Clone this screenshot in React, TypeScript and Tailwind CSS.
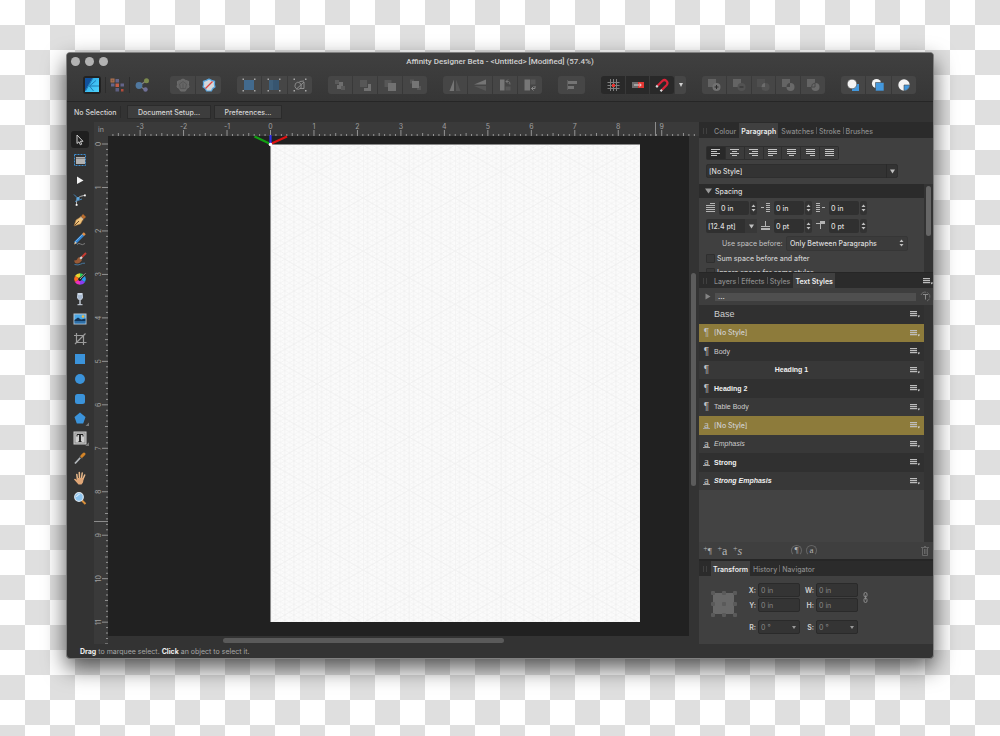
import type { ReactNode } from 'react'
import clsx from 'clsx'

const INCH = 43.47

function Svg({ w = 14, h = 14, children }: { w?: number; h?: number; children: ReactNode }) {
  return (
    <svg width={w} height={h} viewBox={`0 0 ${w} ${h}`} fill="none" className="block shrink-0" aria-hidden="true">
      {children}
    </svg>
  )
}

/* ---------- toolbar icons ---------- */

const corners = (
  <g fill="#a8a8a8">
    <rect x="0.5" y="0.5" width="1.5" height="1.5" />
    <rect x="12" y="0.5" width="1.5" height="1.5" />
    <rect x="0.5" y="12" width="1.5" height="1.5" />
    <rect x="12" y="12" width="1.5" height="1.5" />
  </g>
)

const flower = 'M7 1 9.6 2.4 12.6 3.4 12.4 6.4 13 9 10.6 10.6 9.4 13H4.6L3.4 10.6 1 9 1.6 6.4 1.4 3.4 4.4 2.4Z'

const DesignerPersona = (
  <Svg w={16} h={16}>
    <defs>
      <linearGradient id="persona" x1="0" y1="0" x2="1" y2="1">
        <stop offset="0" stopColor="#2aa9e8" />
        <stop offset="1" stopColor="#4ed2fb" />
      </linearGradient>
    </defs>
    <rect x="1" y="1" width="14" height="14" fill="url(#persona)" />
    <path d="M1 1h7.500L1 14Z" fill="#11519c" />
    <path d="M9 1 1.500 14M5.500 9H15M5.500 9 12 3.500M5.500 9l4 5" stroke="#1a6aa6" strokeWidth="0.800" />
  </Svg>
)

const PixelPersona = (
  <Svg>
    <rect x="0.500" y="0.500" width="4" height="4" fill="#b5744f" />
    <rect x="1.500" y="1.500" width="2" height="2" fill="#7d5a48" />
    <rect x="5.500" y="1" width="3.500" height="3.500" fill="#64658a" />
    <rect x="1" y="5.500" width="3.500" height="3" fill="#64658a" />
    <rect x="5.500" y="5.500" width="3.500" height="3.500" fill="#c45c45" />
    <rect x="10.500" y="5.500" width="3.500" height="3" fill="#64658a" />
    <rect x="5.500" y="10" width="3.500" height="3.500" fill="#5d5e80" />
    <rect x="11" y="11" width="2.500" height="2.500" fill="#b34b3a" />
  </Svg>
)

const ExportPersona = (
  <Svg>
    <path d="M4 8 11.500 2.500M4 8l7 4" stroke="#808080" strokeWidth="1.200" />
    <circle cx="4" cy="7.500" r="3.400" fill="#50789f" />
    <circle cx="11.500" cy="2.700" r="2.500" fill="#7c8a4d" />
    <circle cx="10.500" cy="11.500" r="2.200" fill="#6f7097" />
  </Svg>
)

type Item = { label: string; icon: ReactNode }

const defaults: Item[] = [
  {
    label: 'Synchronise Defaults',
    icon: (
      <Svg>
        <path d={flower} fill="#666666" stroke="#6e6e6e" strokeLinejoin="round" />
        <path d="M7 3.500 10.500 6 9.500 10.500h-5L3.500 6ZM7 5.500v5" stroke="#505050" strokeWidth="0.700" />
      </Svg>
    ),
  },
  {
    label: 'Revert Defaults',
    icon: (
      <Svg>
        <path d={flower} fill="#d5d8dc" stroke="#5aa7e0" strokeWidth="1.200" strokeLinejoin="round" />
        <path d="M3.500 10.500 10.500 3.500" stroke="#e0443e" strokeWidth="1.300" />
      </Svg>
    ),
  },
]

const dots = [2, 4, 6, 8, 10]

const pixelModes: Item[] = [
  {
    label: 'Pixel Grid',
    icon: (
      <Svg>
        {corners}
        <rect x="2" y="2" width="10" height="10" fill="#34516b" />
        {dots.map((y) => dots.map((x) => <rect key={`${x}-${y}`} x={x + 0.5} y={y + 0.5} width="1" height="1" fill="#6db9f5" />))}
      </Svg>
    ),
  },
  {
    label: 'Force Pixel Alignment',
    icon: (
      <Svg>
        {corners}
        <rect x="2" y="2" width="10" height="10" fill="#364a5c" />
        {dots.map((y) => dots.map((x) => <rect key={`${x}-${y}`} x={x + 0.5} y={y + 0.5} width="1" height="1" fill={x > 5 ? '#3f79ad' : '#5a9bd0'} />))}
      </Svg>
    ),
  },
  {
    label: 'Move By Whole Pixels',
    icon: (
      <Svg>
        {corners}
        <path d="M2.500 5.500Q5 3 7 5t1 5q-3 2.500-5 .5T2.500 5.500" stroke="#8f8f8f" strokeWidth="0.900" />
        <path d="M3.500 11 11 4v6.500H7M6.500 3.500 11 3" stroke="#939393" strokeWidth="0.900" />
      </Svg>
    ),
  },
]

const arrange: Item[] = [
  { label: 'Move to Back', icon: <Svg><path d="M2 2h4v4H2zM8 8h4v4H8z" fill="#5a5a5a" /><path d="M6 4h4v4h-4zM4 7h4v4H4z" fill="#6e6e6e" /></Svg> },
  { label: 'Back One', icon: <Svg><path d="M2 2h7v7H2z" fill="#575757" /><path d="M10 6h3v7H6v-3h4z" fill="#717171" /></Svg> },
  { label: 'Forward One', icon: <Svg><path d="M1.500 2h7v7h-7z" fill="#575757" /><path d="M5 5h8v8H5z" fill="#717171" /></Svg> },
  { label: 'Move to Front', icon: <Svg><path d="M2 1.500h4v4H2zM9 8h4v4H9z" fill="#575757" /><path d="M4 3h7v7H4z" fill="#757575" /></Svg> },
]

const transforms: Item[] = [
  { label: 'Flip Horizontal', icon: <Svg><path d="M6 1.500V13H1.500Z" fill="#757575" /><path d="M8 1.500V13h4.500Z" fill="#575757" /></Svg> },
  { label: 'Flip Vertical', icon: <Svg><path d="M13 1.500v5H1Z" fill="#757575" /><path d="M13 13V8H1Z" fill="#575757" /></Svg> },
  { label: 'Rotate Anticlockwise', icon: <Svg><path d="M2 1.500h4.500v11H2z" fill="#777" /><path d="M7.500 8.500h5v4h-5z" fill="#575757" /><path d="M8 3.500h2.500q1.500 0 1.500 3M10 1.500 8 3.500l2 2" stroke="#777" /></Svg> },
  { label: 'Rotate Clockwise', icon: <Svg><path d="M1.500 1.500H7v11H1.500z" fill="#777" /><path d="M7.500 1.500h5v5h-5z" fill="#575757" /><path d="M12 8v2.500H8.500M10.500 8.500l-2 2 2 2" stroke="#888" /></Svg> },
]

const alignment: Item[] = [
  { label: 'Alignment', icon: <Svg><path d="M2.500 2v10" stroke="#5c5c5c" /><path d="M3 3h9v3H3zM3 8h6v3H3z" fill="#747474" /></Svg> },
]

const snapping: Item[] = [
  {
    label: 'Show Grid',
    icon: (
      <Svg>
        <path d="M4.500 1v12M7.500 1v12M10.500 1v12M1.500 4.500h12M1.500 7.500h12M1.500 10.500h12" stroke="#808080" />
        <rect x="6" y="6" width="3" height="3" fill="#e5322d" />
      </Svg>
    ),
  },
  {
    label: 'Snap to Shape',
    icon: (
      <Svg>
        <rect x="1" y="4" width="6" height="6" fill="#6d6d6d" />
        <rect x="7" y="4" width="6" height="6" fill="#e33632" />
        <path d="M3 7h7M8.500 5.300 10.300 7 8.500 8.700" stroke="#e8e8e8" strokeWidth="0.900" />
      </Svg>
    ),
  },
  {
    label: 'Snapping',
    icon: (
      <Svg>
        <path d="M2.500 7.800 7.300 3Q9.500 1 11.500 3t0 4.200L6.800 12" stroke="#d92337" strokeWidth="2.200" />
        <path d="M1.200 9.100 2.700 7.600M5.500 13.200l1.500-1.500" stroke="#d9d9d9" strokeWidth="2.200" />
      </Svg>
    ),
  },
]

const booleans: Item[] = [
  { label: 'Add', icon: <Svg><path d="M1 1h8v8H1z" fill="#646464" /><circle cx="9.500" cy="9" r="4" fill="#717171" /><path d="M9.500 7v4M7.500 9h4" stroke="#2c2c2c" /></Svg> },
  { label: 'Subtract', icon: <Svg><path d="M1 1h8v8H1z" fill="#646464" /><circle cx="9.500" cy="9" r="4" fill="#525252" /><path d="M7.500 9h4" stroke="#2c2c2c" /></Svg> },
  { label: 'Intersect', icon: <Svg><path d="M1 1h8v8H1z" fill="#4f4f4f" /><circle cx="9.500" cy="9" r="4" fill="#525252" /><path d="M9 5.100V9H5.500Q5.600 5.400 9 5.100" fill="#6c6c6c" /></Svg> },
  { label: 'Divide', icon: <Svg><path d="M1 1h8v8H1z" fill="#646464" /><circle cx="9.500" cy="9" r="4" fill="#696969" /><path d="M9 5.100V9H5.500Q5.600 5.400 9 5.100" fill="#474747" /></Svg> },
  { label: 'Combine', icon: <Svg><path d="M1 1h8v8H1z" fill="#646464" /><circle cx="9.500" cy="9" r="4" fill="#696969" /><path d="M9 5v4H5.500Q5.600 5.400 9 5.100" stroke="#464646" strokeWidth="0.900" /></Svg> },
]

const insertion: Item[] = [
  { label: 'Insert Behind', icon: <Svg><path d="M6 6h7v7H6z" fill="#4398dd" /><circle cx="6" cy="6" r="4.800" fill="#f4f4f4" stroke="#474747" strokeWidth="0.600" /></Svg> },
  { label: 'Insert on Top', icon: <Svg><circle cx="5.500" cy="5.500" r="4.600" fill="#f4f4f4" /><path d="M4.500 4.500h8.500v8.500H4.500z" fill="#4398dd" stroke="#474747" strokeWidth="0.600" /></Svg> },
  { label: 'Insert Inside', icon: <Svg><circle cx="7" cy="7" r="5.700" fill="#f4f4f4" /><path d="M7 7h5.700A5.700 5.700 0 0 1 7 12.700Z" fill="#4398dd" stroke="#474747" strokeWidth="0.600" /></Svg> },
]

function ButtonGroup({ items, className, pressed }: { items: Item[]; className: string; pressed?: boolean }) {
  return (
    <div className={clsx('flex h-[18px] shrink-0 gap-px overflow-hidden rounded-[3px]', className)}>
      {items.map((item) => (
        <button
          key={item.label}
          aria-label={item.label}
          className={clsx('flex flex-1 items-center justify-center', pressed ? 'bg-[#292929]' : 'bg-[#464646]')}
        >
          {item.icon}
        </button>
      ))}
    </div>
  )
}

/* ---------- tools ---------- */

const shapeFill = '#3b93da'

const tools: (Item & { flyout?: boolean })[] = [
  { label: 'Move Tool', icon: <Svg><path d="M4 2v8.500l2-1.700 1.300 3 1.400-.6-1.300-2.900h2.600Z" fill="#222" stroke="#dcdcdc" strokeWidth="0.900" /></Svg> },
  {
    label: 'Artboard Tool',
    icon: (
      <Svg>
        <rect x="1.500" y="1.500" width="11" height="11" stroke="#3c8ed2" strokeDasharray="2 1" />
        <rect x="3" y="4" width="9" height="7" fill="#b1b1b1" />
        <path d="M3 5.500h9" stroke="#858585" />
      </Svg>
    ),
  },
  { label: 'Node Tool', icon: <Svg><path d="M4 3.500 10.500 7.500 4 11Z" fill="#f1f1f1" /></Svg> },
  {
    label: 'Corner Tool',
    icon: (
      <Svg>
        <path d="M3.500 12V9Q3.500 3.500 11 2.500" stroke="#c2c2c2" strokeWidth="0.900" />
        <path d="M1 1.500 5 5.500M2 8.500 9 6" stroke="#4b91c9" strokeWidth="0.900" />
        <rect x="2.700" y="11" width="1.800" height="1.800" fill="#fff" />
        <rect x="11" y="1.500" width="1.800" height="1.800" fill="#fff" />
        <circle cx="5" cy="5.500" r="1.600" fill="#5ba8e2" />
      </Svg>
    ),
  },
  {
    label: 'Pen Tool',
    icon: (
      <Svg>
        <path d="M1 13 3 7l4.500-3L10 6.500 7.500 11Z" fill="#eec27c" stroke="#a5703a" strokeWidth="0.500" />
        <path d="M1.500 12.500 6 8" stroke="#5d3d1e" strokeWidth="0.900" />
        <path d="M8 3.500 10 1l3 3-2.500 2.200Z" fill="#b96d2d" />
        <path d="M7.500 4 10.200 6.600" stroke="#e9e4da" />
      </Svg>
    ),
  },
  {
    label: 'Pencil Tool',
    icon: (
      <Svg>
        <path d="M2 11 10.500 2.500" stroke="#3386d6" strokeWidth="2.800" />
        <path d="M2.500 9.500 10 2" stroke="#80bdf0" strokeWidth="0.800" />
        <path d="M10 3 11.800 1.300" stroke="#e08d43" strokeWidth="2.800" />
        <path d="M1 12.500 3.800 11 2.300 9.500Z" fill="#f1cd9d" />
        <path d="M4 12.500q2-2 3.500-.5t4.500-.5" stroke="#8e8e8e" strokeWidth="0.800" />
      </Svg>
    ),
  },
  {
    label: 'Vector Brush Tool',
    icon: (
      <Svg>
        <path d="M1 8.500q3 .5 3.500-2L6 5l3 3-1 1.500q-2 2.500-4.500 2Q1.500 11 1 8.500Z" fill="#9a5a36" />
        <path d="M7.200 6.800 9.200 4.800" stroke="#d8d8d8" strokeWidth="2.200" />
        <path d="M9 5 13 1" stroke="#c43b31" strokeWidth="2" />
        <path d="M1.500 12.500q4 1 6-.3t4.500-1" stroke="#4a87b8" strokeWidth="0.800" />
      </Svg>
    ),
  },
  {
    label: 'Fill Tool',
    icon: (
      <Svg>
        <g strokeWidth="4">
          <path d="M7 3.200A3.800 3.800 0 0 0 3.700 5.100" stroke="#e5d832" />
          <path d="M3.700 5.100A3.800 3.800 0 0 0 3.700 8.900" stroke="#ff6a1f" />
          <path d="M3.700 8.900A3.800 3.800 0 0 0 7 10.800" stroke="#ee2fc0" />
          <path d="M7 10.800A3.800 3.800 0 0 0 10.300 8.900" stroke="#8a3df2" />
          <path d="M10.300 8.900A3.800 3.800 0 0 0 10.300 5.100" stroke="#2a9bf0" />
          <path d="M10.300 5.100A3.800 3.800 0 0 0 7 3.200" stroke="#35d35b" />
        </g>
        <path d="M6 8.500 12.500 1.500" stroke="#222" strokeWidth="2" />
        <path d="M7 7 12.500 1.200" stroke="#c4c4c4" strokeWidth="0.800" />
      </Svg>
    ),
  },
  {
    label: 'Transparency Tool',
    icon: (
      <Svg>
        <path d="M4.500 1h5l.5 4.500Q9.500 8 7 8T4 5.500Z" fill="#cdd8e6" />
        <path d="M4.800 3h4.500l.2 2.500Q9 7 7 7T4.600 5.500Z" fill="#a9bbd1" />
        <path d="M7 8v4.500" stroke="#d2dbe6" strokeWidth="1.300" />
        <path d="M4.500 12.700h5" stroke="#d2dbe6" />
      </Svg>
    ),
  },
  {
    label: 'Place Image Tool',
    icon: (
      <Svg>
        <rect x="0.500" y="1.500" width="13" height="11" fill="#b9c3cc" />
        <rect x="1.500" y="2.500" width="11" height="9" fill="#4ba7e5" />
        <path d="M1.500 8 5 5.500 8 7.500l4.500-1V9.500h-11Z" fill="#123457" />
        <path d="M1.500 9.500h11v2h-11z" fill="#2f6fa8" />
        <circle cx="10" cy="4.500" r="1.300" fill="#f4b63f" />
      </Svg>
    ),
  },
  { label: 'Crop Tool', icon: <Svg><path d="M3.500 1v9.500h10M1 3.500h9.500V13M2 12 12.500 1.500" stroke="#9c9c9c" strokeWidth="1.200" /></Svg> },
  { label: 'Rectangle Tool', icon: <Svg><rect x="2" y="2" width="10" height="10" fill={shapeFill} /></Svg> },
  { label: 'Ellipse Tool', icon: <Svg><circle cx="7" cy="7" r="5" fill={shapeFill} /></Svg> },
  { label: 'Rounded Rectangle Tool', icon: <Svg><rect x="2" y="2" width="10" height="10" rx="2.500" fill={shapeFill} /></Svg> },
  { label: 'Pentagon Tool', flyout: true, icon: <Svg><path d="M7 1.500 12.500 6l-2.300 6.500H3.800L1.500 6Z" fill={shapeFill} /></Svg> },
  {
    label: 'Frame Text Tool',
    flyout: true,
    icon: (
      <Svg>
        <rect x="1" y="1" width="12" height="12" fill="#8b8b8b" stroke="#cecece" />
        <rect x="2.500" y="2.500" width="9" height="9" fill="#cfcfcf" />
        <path d="M4 5.500V3.500h6v2M7 3.500v7.500M5.500 10.500h3" stroke="#222" />
        <path d="M7 3.500v7" stroke="#222" strokeWidth="1.800" />
      </Svg>
    ),
  },
  {
    label: 'Colour Picker Tool',
    icon: (
      <Svg>
        <path d="M2 12.500 8 6" stroke="#b4b9bd" strokeWidth="1.800" />
        <path d="M6.500 5 9.500 8" stroke="#444" strokeWidth="1.500" />
        <path d="M8.800 5.200 11 3" stroke="#d38428" strokeWidth="3" strokeLinecap="round" />
      </Svg>
    ),
  },
  {
    label: 'View Tool',
    icon: (
      <Svg>
        <path d="M4.500 8.500 3.800 3.500M6.500 7 6.300 1.500M8.500 7 9.200 2M10 8 11.700 4" stroke="#e9b98b" strokeWidth="1.500" strokeLinecap="round" />
        <path d="M3.800 7h7L10 11.500 8.500 13.500h-3L1 8.500Q1.500 7 4 9Z" fill="#dfa677" />
      </Svg>
    ),
  },
  {
    label: 'Zoom Tool',
    icon: (
      <Svg>
        <path d="M9 9.500 12.500 13" stroke="#d98f3a" strokeWidth="2" />
        <circle cx="6" cy="6" r="4.300" fill="#8cc3ee" stroke="#dbe6ef" strokeWidth="1.200" />
        <path d="M3.500 6Q4 3.500 6.500 3.500" stroke="#e9f5ff" />
      </Svg>
    ),
  },
]

function ToolsPanel() {
  return (
    <nav aria-label="Tools" className="w-[27px] shrink-0 bg-[#333333] pt-2 pr-px">
      <div className="grid h-[378px] auto-rows-fr">
        {tools.map((tool, i) => (
          <div key={tool.label} className="relative flex items-center justify-center">
            <button
              aria-label={tool.label}
              className={clsx('flex h-[17px] w-[18px] items-center justify-center rounded-[3px]', i === 0 && 'bg-[#1f1f1f]')}
            >
              {tool.icon}
            </button>
            {tool.flyout && (
              <span className="absolute right-1 bottom-0.5 size-1 bg-[#777] [clip-path:polygon(100%_0,100%_100%,0_100%)]" />
            )}
          </div>
        ))}
      </div>
    </nav>
  )
}

/* ---------- rulers and document ---------- */

function range(first: number, last: number) {
  return Array.from({ length: last - first + 1 }, (_, i) => first + i)
}

function tickLength(i: number) {
  if (i % 8 === 0) return 6
  return i % 4 === 0 ? 3 : 2
}

function HorizontalRuler() {
  const zero = 176.5
  return (
    <svg width="100%" height="14" className="block min-w-0 flex-1" aria-label="Horizontal ruler">
      {range(-29, 240).map((i) => (
        <path key={i} d={`M${zero + (i / 8) * INCH} 14v-${tickLength(i)}`} stroke="#949494" />
      ))}
      {range(-3, 9).map((n) => (
        <text key={n} x={zero + n * INCH} y="7" textAnchor="middle" fill="#a0a0a0" className="text-[7px]">
          {n}
        </text>
      ))}
      <text x="4" y="10" fill="#a0a0a0" className="text-[7px]">in</text>
      <path d="M561.500 0v14" stroke="#8c8c8c" />
    </svg>
  )
}

function VerticalRuler() {
  const zero = 8
  return (
    <svg width="14" height="100%" className="block w-[14px] shrink-0 bg-[#3a3a3a]" aria-label="Vertical ruler">
      {range(0, 240).map((i) => (
        <path key={i} d={`M14 ${zero + (i / 8) * INCH}h-${tickLength(i)}`} stroke="#949494" />
      ))}
      {range(0, 11).map((n) => {
        const y = zero + n * INCH
        return (
          <text key={n} x="7" y={y} transform={`rotate(-90 7 ${y})`} textAnchor="middle" fill="#a0a0a0" className="text-[7px]">
            {n}
          </text>
        )
      })}
      <path d="M0 385.500h14" stroke="#8c8c8c" />
    </svg>
  )
}

function IsometricPage() {
  return (
    <div className="relative h-[478px] w-[370px] border-t border-l border-[#8a8a8a] bg-[#fbfbfb]">
      <svg width="100%" height="100%" className="block" aria-hidden="true">
        <defs>
          <pattern id="iso-minor" width="9.2" height="5.31" patternUnits="userSpaceOnUse">
            <path d="M0 0 9.200 5.310M9.200 0 0 5.310M0 0v5.310M4.600 0v5.310" stroke="#ebebeb" strokeWidth="0.500" />
          </pattern>
          <pattern id="iso-major" width="92" height="53.1" patternUnits="userSpaceOnUse">
            <path d="M0 0 92 53.100M92 0 0 53.100M0 0v53.100M46 0v53.100" stroke="#eeeeee" strokeWidth="0.600" fill="none" />
          </pattern>
        </defs>
        <rect width="100%" height="100%" fill="url(#iso-minor)" />
        <rect width="100%" height="100%" fill="url(#iso-major)" />
      </svg>
      <svg width="36" height="14" viewBox="0 0 36 14" className="absolute -top-2.5 -left-[18px]" aria-hidden="true">
        <path d="M17.500 9 1.500 1.500" stroke="#12a012" strokeWidth="2.200" />
        <path d="M17.500 9 34 1.500" stroke="#dd1111" strokeWidth="2.200" />
        <path d="M17.500 9V0" stroke="#2f2fee" strokeWidth="2.200" />
        <circle cx="17.500" cy="9.500" r="1.800" fill="#fff" />
      </svg>
    </div>
  )
}

function DocumentView() {
  return (
    <main className="flex min-w-0 flex-1 flex-col">
      <div className="flex h-[14px] shrink-0 bg-[#3a3a3a]">
        <HorizontalRuler />
      </div>
      <div className="flex min-h-0 flex-1">
        <VerticalRuler />
        <div className="flex min-w-0 flex-1 flex-col">
          <div className="min-h-[500px] flex-1 overflow-x-clip bg-[#212121] pt-2 pl-[162px]">
            <IsometricPage />
          </div>
          <div className="flex h-2 shrink-0 items-center bg-[#333333] pl-[115px]">
            <div className="h-[5px] w-[281px] rounded-full bg-[#5a5a5a]" />
          </div>
        </div>
        <div className="w-[10px] shrink-0 bg-[#333333] pt-[137px] pl-0.5">
          <div className="h-[213px] w-[5px] rounded-full bg-[#5c5c5c]" />
        </div>
      </div>
    </main>
  )
}

/* ---------- panels ---------- */

function TabBar({ tabs, active, menu }: { tabs: string[]; active: string; menu?: boolean }) {
  return (
    <div role="tablist" className="flex h-[15px] shrink-0 items-stretch bg-[#2b2b2b] pl-1">
      <span className="mr-1 flex items-center gap-0.5 py-1">
        <i className="h-[6px] w-px bg-[#404040]" />
        <i className="h-[6px] w-px bg-[#404040]" />
      </span>
      {tabs.map((tab, i) => {
        const isActive = tab === active
        const dividedLeft = i > 0 && !isActive && tabs[i - 1] !== active
        const dividedRight = i < tabs.length - 1 && !isActive && tabs[i + 1] !== active
        return (
          <div key={tab} className="flex items-center">
            {dividedLeft && <i className="h-[7px] w-px bg-[#565656]" />}
            <button
              role="tab"
              aria-selected={isActive}
              className={clsx(
                'h-full whitespace-nowrap pt-px',
                isActive ? 'bg-[#404040] px-[2px] font-semibold text-[#eeeeee]' : 'font-medium text-[#8a8a8a]',
                !isActive && (dividedLeft ? 'pl-[2px]' : 'pl-[3px]'),
                !isActive && (dividedRight ? 'pr-[2px]' : 'pr-[3px]')
              )}
            >
              {tab}
            </button>
          </div>
        )
      })}
      {menu && (
        <button aria-label="Panel preferences" className="ml-auto flex items-center">
          <MenuIcon />
        </button>
      )}
    </div>
  )
}

function MenuIcon() {
  return (
    <Svg w={10} h={8}>
      <path d="M0 1h7v6H0z" fill="#ffffff" fillOpacity="0.15" />
      <path d="M0 1.500h7M0 3.500h7M0 5.500h7" stroke="#bdbdbd" />
      <path d="M7.500 5.500H10L8.800 7.500Z" fill="#dddddd" />
    </Svg>
  )
}

const alignRows: [string, number[][]][] = [
  ['Align Left', [[0, 9], [0, 6], [0, 9], [0, 6]]],
  ['Align Centre', [[0, 9], [2, 7], [0, 9], [2, 7]]],
  ['Align Right', [[0, 9], [3, 9], [0, 9], [3, 9]]],
  ['Justify Left', [[0, 9], [0, 9], [0, 9], [0, 5]]],
  ['Justify Centre', [[0, 9], [0, 9], [0, 9], [2, 7]]],
  ['Justify Right', [[0, 9], [0, 9], [0, 9], [4, 9]]],
  ['Justify All', [[0, 9], [0, 9], [0, 9], [0, 9]]],
]

function Stepper() {
  return (
    <span className="flex h-[14px] w-[7px] items-center justify-center rounded-[2px] bg-[#333333]">
      <Svg w={5} h={8}>
        <path d="M.500 3 2.500.500 4.500 3ZM.500 5 2.500 7.500 4.500 5Z" fill="#c0c0c0" />
      </Svg>
    </span>
  )
}

function SpinField({ label, value, icon }: { label: string; value: string; icon?: ReactNode }) {
  return (
    <label className="flex items-center">
      {icon && <span className="flex w-[13px]">{icon}</span>}
      <input
        aria-label={label}
        defaultValue={value}
        className="mr-px h-[14px] w-[30px] rounded-[2px] bg-[#303030] pl-0.5 font-medium text-[#dddddd] outline-none"
      />
      <Stepper />
    </label>
  )
}

const lines = (d: string) => (
  <Svg w={10} h={10}>
    <path d={d} stroke="#b4b4b4" />
  </Svg>
)

function DownArrow({ color = '#c0c0c0' }: { color?: string }) {
  return (
    <Svg w={5} h={5}>
      <path d="M0 .5h5L2.500 4.500Z" fill={color} />
    </Svg>
  )
}

function ParagraphPanel() {
  return (
    <section className="shrink-0">
      <div className="bg-[#2b2b2b] pt-px">
        <TabBar tabs={['Colour', 'Paragraph', 'Swatches', 'Stroke', 'Brushes']} active="Paragraph" />
      </div>
      <div className="bg-[#404040] px-[7px] pt-2 pb-1.5">
        <div className="flex h-[14px] w-[133px] gap-px rounded-[2px] bg-[#2e2e2e] p-px">
          {alignRows.map(([label, rows], i) => (
            <button key={label} aria-label={label} className={clsx('flex flex-1 items-center justify-center', i === 0 ? 'bg-[#292929]' : 'bg-[#3b3b3b]')}>
              <Svg w={9} h={8}>
                {rows.map(([a, b], n) => (
                  <path key={n} d={`M${a} ${0.5 + n * 2}H${b}`} stroke="#c4c4c4" />
                ))}
              </Svg>
            </button>
          ))}
        </div>
        <div className="relative mt-1 flex w-[192px] items-center">
          <select aria-label="Paragraph style" className="h-[14px] w-full appearance-none rounded-[2px] border border-[#2e2e2e] bg-[#333333] pl-0.5 font-medium text-[#dddddd]">
            <option>[No Style]</option>
          </select>
          <span className="pointer-events-none absolute right-0 flex h-[14px] w-3 items-center justify-center border-l border-[#2a2a2a]">
            <DownArrow />
          </span>
        </div>
      </div>
      <div className="flex bg-[#333333]">
        <div className="min-w-0 flex-1">
          <button className="flex h-[14px] w-full items-center gap-[3px] bg-[#2b2b2b] pl-1.5 font-medium text-[#dddddd]">
            <Svg w={7} h={6}>
              <path d="M0 .5h7L3.500 5.500Z" fill="#999" />
            </Svg>
            Spacing
          </button>
          <div className="h-[74px] overflow-hidden bg-[#404040] pt-px pl-[7px]">
            <div className="flex h-[18px] items-center gap-1">
              <SpinField label="Left indent" value="0 in" icon={lines('M4 .5h5M0 2.500h9M0 4.500h9M0 6.500h9M0 8.500h9')} />
              <SpinField label="Right indent" value="0 in" icon={lines('M0 4.500h3M5 .5h4M5 2.500h4M5 4.500h4M5 6.500h4M5 8.500h4')} />
              <SpinField label="Last line outdent" value="0 in" icon={lines('M0 .5h4M0 2.500h4M0 4.500h4M0 6.500h4M0 8.500h4M6 4.500h3')} />
            </div>
            <div className="flex h-[18px] items-center gap-1">
              <span className="relative flex w-[51px] items-center">
                <select aria-label="Leading" className="h-[14px] w-full appearance-none rounded-[2px] bg-[#303030] pl-0.5 font-medium text-[#dddddd]">
                  <option>[12.4 pt]</option>
                </select>
                <span className="pointer-events-none absolute right-0 flex h-[14px] w-3 items-center justify-center bg-[#383838]">
                  <DownArrow />
                </span>
              </span>
              <SpinField label="Space before" value="0 pt" icon={lines('M4.500 0v5M0 5.500h9M0 7.500h9M0 8.500h9')} />
              <SpinField label="Space after" value="0 pt" icon={lines('M0 2.500h9M4 .5h5M4 1.500h5M4.500 3v5')} />
            </div>
            <label className="flex h-4 items-center pl-4 text-[#c4c4c4]">
              <span className="w-16 whitespace-nowrap">Use space before:</span>
              <span className="relative flex w-[122px] items-center">
                <select className="h-[15px] w-full appearance-none rounded-[2px] border border-[#363636] bg-[#3b3b3b] pl-[3px] font-medium text-[#dddddd]">
                  <option>Only Between Paragraphs</option>
                </select>
                <span className="pointer-events-none absolute right-1">
                  <Svg w={5} h={8}>
                    <path d="M.500 3 2.500.500 4.500 3ZM.500 5 2.500 7.500 4.500 5Z" fill="#c0c0c0" />
                  </Svg>
                </span>
              </span>
            </label>
            <label className="flex h-[14px] items-center gap-0.5 font-medium text-[#cccccc]">
              <input type="checkbox" className="size-[9px] appearance-none rounded-[1px] border border-[#2f2f2f] bg-[#383838]" />
              Sum space before and after
            </label>
            <label className="flex h-[14px] items-center gap-0.5 font-medium text-[#cccccc]">
              <input type="checkbox" className="size-[9px] appearance-none rounded-[1px] border border-[#2f2f2f] bg-[#383838]" />
              Ignore space for some styles
            </label>
          </div>
        </div>
        <div className="w-[9px] pt-0.5 pl-0.5">
          <div className="h-[50px] w-[5px] rounded-full bg-[#666666]" />
        </div>
      </div>
    </section>
  )
}

type TextStyle = { name: string; mark: '' | '¶' | 'a'; selected?: boolean; className: string }

const arial = "font-['Liberation_Sans',Arial,sans-serif]"

const textStyles: TextStyle[] = [
  { name: 'Base', mark: '', className: clsx(arial, 'text-[9px]') },
  { name: '[No Style]', mark: '¶', selected: true, className: 'font-medium' },
  { name: 'Body', mark: '¶', className: arial },
  { name: 'Heading 1', mark: '¶', className: clsx(arial, 'flex-1 pr-[41px] text-center font-bold') },
  { name: 'Heading 2', mark: '¶', className: clsx(arial, 'font-bold') },
  { name: 'Table Body', mark: '¶', className: arial },
  { name: '[No Style]', mark: 'a', selected: true, className: 'font-medium' },
  { name: 'Emphasis', mark: 'a', className: clsx(arial, 'italic') },
  { name: 'Strong', mark: 'a', className: clsx(arial, 'font-bold') },
  { name: 'Strong Emphasis', mark: 'a', className: clsx(arial, 'font-bold italic') },
]

function TextStylesPanel() {
  return (
    <section className="mt-px flex flex-1 flex-col">
      <TabBar tabs={['Layers', 'Effects', 'Styles', 'Text Styles']} active="Text Styles" menu />
      <div className="flex h-[17px] shrink-0 items-center bg-[#3e3e3e] pr-0.5 pl-1.5">
        <Svg w={6} h={7}>
          <path d="M.5.500 5.500 3.500.500 6.500Z" fill="#848484" />
        </Svg>
        <input aria-label="Current style" defaultValue="..." className="mx-1 h-2 min-w-0 flex-1 bg-[#4f4f4f] pl-[3px] font-semibold text-[#e0e0e0] outline-none" />
        <button aria-label="Show hierarchical">
          <Svg w={11} h={11}>
            <path d="M1 4A4.600 4.600 0 1 1 7 10" stroke="#6c6c6c" strokeDasharray="6 1" />
            <path d="M3 3.500h5M5.500 3.500V8.500" stroke="#8a8a8a" />
          </Svg>
        </button>
      </div>
      <div className="flex flex-1 bg-[#333333]">
        <div className="flex flex-1 flex-col bg-[#434343]">
          <ul className="grid h-[185px] auto-rows-fr">
            {textStyles.map((style, i) => (
              <li
                key={i}
                className={clsx(
                  'flex items-center pr-1 text-[#cfcfcf]',
                  style.selected ? 'bg-[#8d7b3b]' : i % 2 === 0 ? 'bg-[#303030]' : 'bg-[#383838]'
                )}
              >
                <span className="flex w-[15px] items-center justify-center text-[#c0c0c0]">
                  {style.mark === '¶' && <span className="font-['Liberation_Sans',sans-serif] text-[10px]">¶</span>}
                  {style.mark === 'a' && (
                    <span className="border-b border-[#a5a5a5] px-px font-['Liberation_Serif',serif] text-[11px] leading-[7px]">a</span>
                  )}
                </span>
                <span className={clsx('whitespace-nowrap', style.className, style.className.includes('bold') && 'text-[#f0f0f0]')}>{style.name}</span>
                <button aria-label={`${style.name} options`} className="ml-auto">
                  <MenuIcon />
                </button>
              </li>
            ))}
          </ul>
        </div>
        <div className="w-[9px]" />
      </div>
      <div className="flex h-[17px] shrink-0 items-center bg-[#3f3f3f] pr-1 pl-[3px] font-['Liberation_Serif',serif] text-[#b5b5b5]">
        <div className="flex gap-1">
          {['¶', 'a', 's'].map((mark) => (
            <button key={mark} aria-label={`Create ${mark} style`} className="flex h-3 w-[11px] items-start justify-center">
              <span className="text-[8px] leading-[7px]">+</span>
              <span className={clsx('leading-[12px]', mark === '¶' ? 'text-[9px]' : 'text-[12px]', mark === 's' && 'italic')}>{mark}</span>
            </button>
          ))}
        </div>
        <div className="ml-[48px] flex gap-1">
          {['¶', 'a'].map((mark) => (
            <button key={mark} aria-label={`Update ${mark} style`} className="flex size-[11px] items-center justify-center rounded-full border border-[#666666] border-b-transparent text-[9px] leading-none">
              {mark}
            </button>
          ))}
        </div>
        <button aria-label="Delete style" className="ml-auto">
          <Svg w={8} h={10}>
            <path d="M0 1.500h8M3 .5h2M1.500 2v7.500h5V2M3.500 3v5M5 3v5" stroke="#6c6c6c" strokeWidth="0.900" />
          </Svg>
        </button>
      </div>
    </section>
  )
}

const box = 'h-[14px] w-[42px] rounded-[2px] border border-[#2a2a2a] bg-[#343434] pl-[2px] text-[#888888] outline-none'

function TransformField({ label }: { label: string }) {
  return (
    <label className="flex items-center gap-0.5 font-semibold text-[#d0d0d0]">
      <span className="flex w-[9px] justify-end">{label}:</span>
      <input defaultValue="0 in" className={clsx(box, 'font-normal')} />
    </label>
  )
}

function TransformSelect({ label }: { label: string }) {
  return (
    <label className="relative flex items-center gap-0.5 font-semibold text-[#d0d0d0]">
      <span className="flex w-[9px] justify-end">{label}:</span>
      <select className={clsx(box, 'appearance-none font-normal')}>
        <option>0 °</option>
      </select>
      <span className="pointer-events-none absolute right-1">
        <Svg w={4} h={3}>
          <path d="M0 0h4L2 3Z" fill="#999" />
        </Svg>
      </span>
    </label>
  )
}

function TransformPanel() {
  const handles = [1, 12, 23]
  return (
    <section className="mt-0.5 shrink-0">
      <TabBar tabs={['Transform', 'History', 'Navigator']} active="Transform" />
      <div className="flex h-[68px] items-start bg-[#404040] pt-[7px] pl-3">
        <div className="pt-2">
          <Svg w={26} h={26}>
            <rect x="2" y="2" width="21" height="21" fill="#686868" />
            {handles.map((y) => handles.map((x) => <rect key={`${x}-${y}`} x={x - 1} y={y - 1} width="4" height="4" rx="1" fill="#5a5a5a" />))}
          </Svg>
        </div>
        <div className="ml-[10px] grid grid-cols-2 gap-x-[5px]">
          <TransformField label="X" />
          <TransformField label="W" />
          <div className="mt-px"><TransformField label="Y" /></div>
          <div className="mt-px"><TransformField label="H" /></div>
          <div className="mt-2"><TransformSelect label="R" /></div>
          <div className="mt-2"><TransformSelect label="S" /></div>
        </div>
        <button aria-label="Lock aspect ratio" className="ml-[5px] pt-[9px]">
          <Svg w={5} h={11}>
            <rect x="1" y="0.500" width="3" height="4.500" rx="1.500" stroke="#8c8c8c" />
            <rect x="1" y="6" width="3" height="4.500" rx="1.500" stroke="#8c8c8c" />
            <path d="M2.500 3.500v4" stroke="#8c8c8c" />
          </Svg>
        </button>
      </div>
    </section>
  )
}

/* ---------- window ---------- */

function Toolbar() {
  return (
    <div className="flex h-8 items-center pl-4">
      <div className="flex items-center">
        <button aria-label="Designer Persona" className="flex size-[18px] items-center justify-center rounded-[3px] bg-[#222222]">{DesignerPersona}</button>
        <i className="mx-1 h-4 w-px bg-[#2d2d2d]" />
        <button aria-label="Pixel Persona" className="flex w-[14px]">{PixelPersona}</button>
        <i className="mx-[5px] h-4 w-px bg-[#2d2d2d]" />
        <button aria-label="Export Persona" className="flex w-[14px]">{ExportPersona}</button>
      </div>
      <div className="ml-[21px] flex flex-1 gap-4">
        <ButtonGroup items={defaults} className="w-[51px]" />
        <ButtonGroup items={pixelModes} className="w-[75px]" />
        <ButtonGroup items={arrange} className="w-[99px]" />
        <ButtonGroup items={transforms} className="w-[99px]" />
        <ButtonGroup items={alignment} className="w-[27px]" />
        <div className="flex shrink-0 gap-px">
          <ButtonGroup items={snapping} className="w-[73px]" pressed />
          <button aria-label="Snapping options" className="flex h-[18px] w-[11px] items-center justify-center rounded-r-[3px] bg-[#464646]">
            <Svg w={4} h={4}>
              <path d="M0 0h4L2 4Z" fill="#d0d0d0" />
            </Svg>
          </button>
        </div>
        <ButtonGroup items={booleans} className="w-[123px]" />
        <ButtonGroup items={insertion} className="w-[75px]" />
      </div>
    </div>
  )
}

export default function App() {
  return (
    <div className="flex min-h-screen flex-col bg-white bg-[conic-gradient(#dfdfdf_25%,#ffffff_0_50%,#dfdfdf_0_75%,#ffffff_0)] bg-size-[50px_50px] px-[66px] pt-[52px] pb-[77px] font-['Inter','Noto_Sans',sans-serif] text-[7px] leading-[11px]">
      <div className="flex flex-1 flex-col overflow-hidden rounded-[4px] border border-[#808080] bg-[#333333] shadow-[0_9px_22px_rgba(0,0,0,0.65)]">
        <header className="border-b border-[#262626] bg-linear-to-b from-[#404040] to-[#363636]">
          <div className="grid h-4 grid-cols-[1fr_auto_1fr] items-center">
            <div className="flex gap-[5px] pl-1">
              <button aria-label="Close" className="size-[9px] rounded-full bg-[#b3b3b3]" />
              <button aria-label="Minimise" className="size-[9px] rounded-full bg-[#b3b3b3]" />
              <button aria-label="Zoom" className="size-[9px] rounded-full bg-[#b3b3b3]" />
            </div>
            <h1 className="font-['Roboto','Inter',sans-serif] text-[8px] font-medium text-[#d0d0d0]">
              Affinity Designer Beta - &lt;Untitled&gt; [Modified] (57.4%)
            </h1>
          </div>
          <Toolbar />
        </header>

        <div className="flex h-5 shrink-0 items-center pl-[7px] font-medium text-[#d5d5d5]">
          <span className="w-[47px] whitespace-nowrap border-r border-[#2b2b2b] pt-px">No Selection</span>
          <button className="ml-[6px] h-[14px] w-[84px] border border-[#2b2b2b] bg-[#3d3d3d] pt-px">Document Setup...</button>
          <button className="ml-[3px] h-[14px] w-[68px] border border-[#2b2b2b] bg-[#3d3d3d] pt-px">Preferences...</button>
        </div>

        <div className="flex flex-1">
          <ToolsPanel />
          <DocumentView />
          <aside className="flex w-[234px] shrink-0 flex-col bg-[#262626]">
            <ParagraphPanel />
            <TextStylesPanel />
            <TransformPanel />
          </aside>
        </div>

        <footer className="flex h-[14px] shrink-0 items-center pl-[13px] text-[#a6a6a6]">
          <p className="pt-px">
            <b className="font-bold text-[#eeeeee]">Drag</b> to marquee select. <b className="font-bold text-[#eeeeee]">Click</b> an object to select it.
          </p>
        </footer>
      </div>
    </div>
  )
}
